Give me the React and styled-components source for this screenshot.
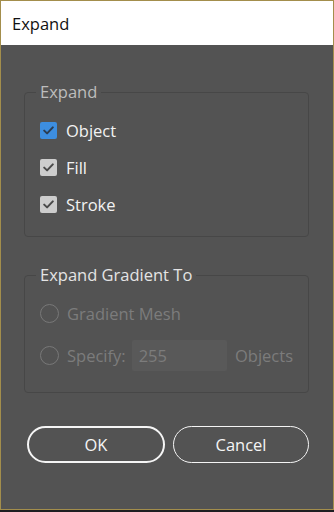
import React from "react";
import styled, { createGlobalStyle } from "styled-components";

const GlobalStyle = createGlobalStyle`
  html, body {
    margin: 0;
    padding: 0;
    background: #1e1e22;
  }
  body {
    font-family: "Open Sans", "Noto Sans", sans-serif;
  }
`;

function CheckIcon({ color }) {
  return (
    <svg width="11" height="9" viewBox="0 0 11 9">
      <path
        d="M1.2 4.6 L4.1 7.4 L9.8 1.4"
        fill="none"
        stroke={color}
        strokeWidth="2"
        strokeLinecap="round"
        strokeLinejoin="round"
      />
    </svg>
  );
}

function Checkbox({ label, accent }) {
  return (
    <Row>
      <Box $accent={accent}>
        <CheckIcon color={accent ? "#2b3d52" : "#4a4a4a"} />
      </Box>
      <Label>{label}</Label>
    </Row>
  );
}

function App() {
  return (
    <>
      <GlobalStyle />
      <Window>
        <TitleBar>Expand</TitleBar>
        <Body>
          <Group>
            <Legend>Expand</Legend>
            <CheckList>
              <Checkbox label="Object" accent />
              <Checkbox label="Fill" />
              <Checkbox label="Stroke" />
            </CheckList>
          </Group>

          <Group $disabled>
            <Legend $bright>Expand Gradient To</Legend>
            <RadioList>
              <RadioRow>
                <Radio />
                <DimLabel>Gradient Mesh</DimLabel>
              </RadioRow>
              <RadioRow>
                <Radio />
                <DimLabel>Specify:</DimLabel>
                <CountInput>255</CountInput>
                <DimLabel>Objects</DimLabel>
              </RadioRow>
            </RadioList>
          </Group>

          <Buttons>
            <Button $primary>OK</Button>
            <Button>Cancel</Button>
          </Buttons>
        </Body>
      </Window>
    </>
  );
}

const Window = styled.div`
  box-sizing: border-box;
  width: 334px;
  height: 510px;
  border: 1px solid #a38e4c;
  display: flex;
  flex-direction: column;
  background: #535353;
`;

const TitleBar = styled.div`
  height: 44px;
  flex-shrink: 0;
  background: #ffffff;
  display: flex;
  align-items: center;
  padding-left: 11px;
  font-size: 16.5px;
  color: #111;
`;

const Body = styled.div`
  flex: 1;
  padding: 37px 24px 0 23px;
  display: flex;
  flex-direction: column;
`;

const Group = styled.fieldset`
  margin: 0 0 28px;
  padding: 0 15px;
  border: 1px solid #474747;
  border-radius: 4px;
  min-width: 0;
`;

const Legend = styled.legend`
  padding: 0 4px;
  margin-left: -4px;
  font-size: 16.5px;
  line-height: 20px;
  color: ${({ $bright }) => ($bright ? "#e4e4e4" : "#bdbdbd")};
`;

const CheckList = styled.div`
  display: flex;
  flex-direction: column;
  padding: 10px 0 13px;
`;

const Row = styled.div`
  height: 37px;
  display: flex;
  align-items: center;
  gap: 9px;
`;

const Box = styled.span`
  width: 17px;
  height: 17px;
  border-radius: 2px;
  background: ${({ $accent }) => ($accent ? "#3d8ee0" : "#cdcdcd")};
  display: flex;
  align-items: center;
  justify-content: center;
`;

const Label = styled.span`
  font-size: 16.5px;
  color: #f2f2f2;
`;

const RadioList = styled.div`
  display: flex;
  flex-direction: column;
  gap: 11px;
  padding: 13px 0 21px;
`;

const RadioRow = styled.div`
  height: 31px;
  display: flex;
  align-items: center;
  gap: 8px;
`;

const Radio = styled.span`
  box-sizing: border-box;
  width: 19px;
  height: 19px;
  border-radius: 50%;
  border: 1.5px solid #787878;
  flex-shrink: 0;
`;

const DimLabel = styled.span`
  font-size: 16.5px;
  color: #7c7c7c;
`;

const CountInput = styled.span`
  box-sizing: border-box;
  width: 97px;
  height: 31px;
  display: flex;
  align-items: center;
  padding-left: 7px;
  margin-left: -2px;
  background: #595959;
  border-radius: 2px;
  font-size: 16.5px;
  color: #7c7c7c;
`;

const Buttons = styled.div`
  display: flex;
  gap: 8px;
  padding: 5px 0 0 3px;
`;

const Button = styled.button`
  box-sizing: border-box;
  flex: 1;
  height: 37px;
  border-radius: 19px;
  border: ${({ $primary }) => ($primary ? "2px" : "1.5px")} solid #f5f5f5;
  background: transparent;
  color: #f5f5f5;
  font-family: "Open Sans", "Noto Sans", sans-serif;
  font-size: 16.5px;
  padding: 0;
`;

export default App;
